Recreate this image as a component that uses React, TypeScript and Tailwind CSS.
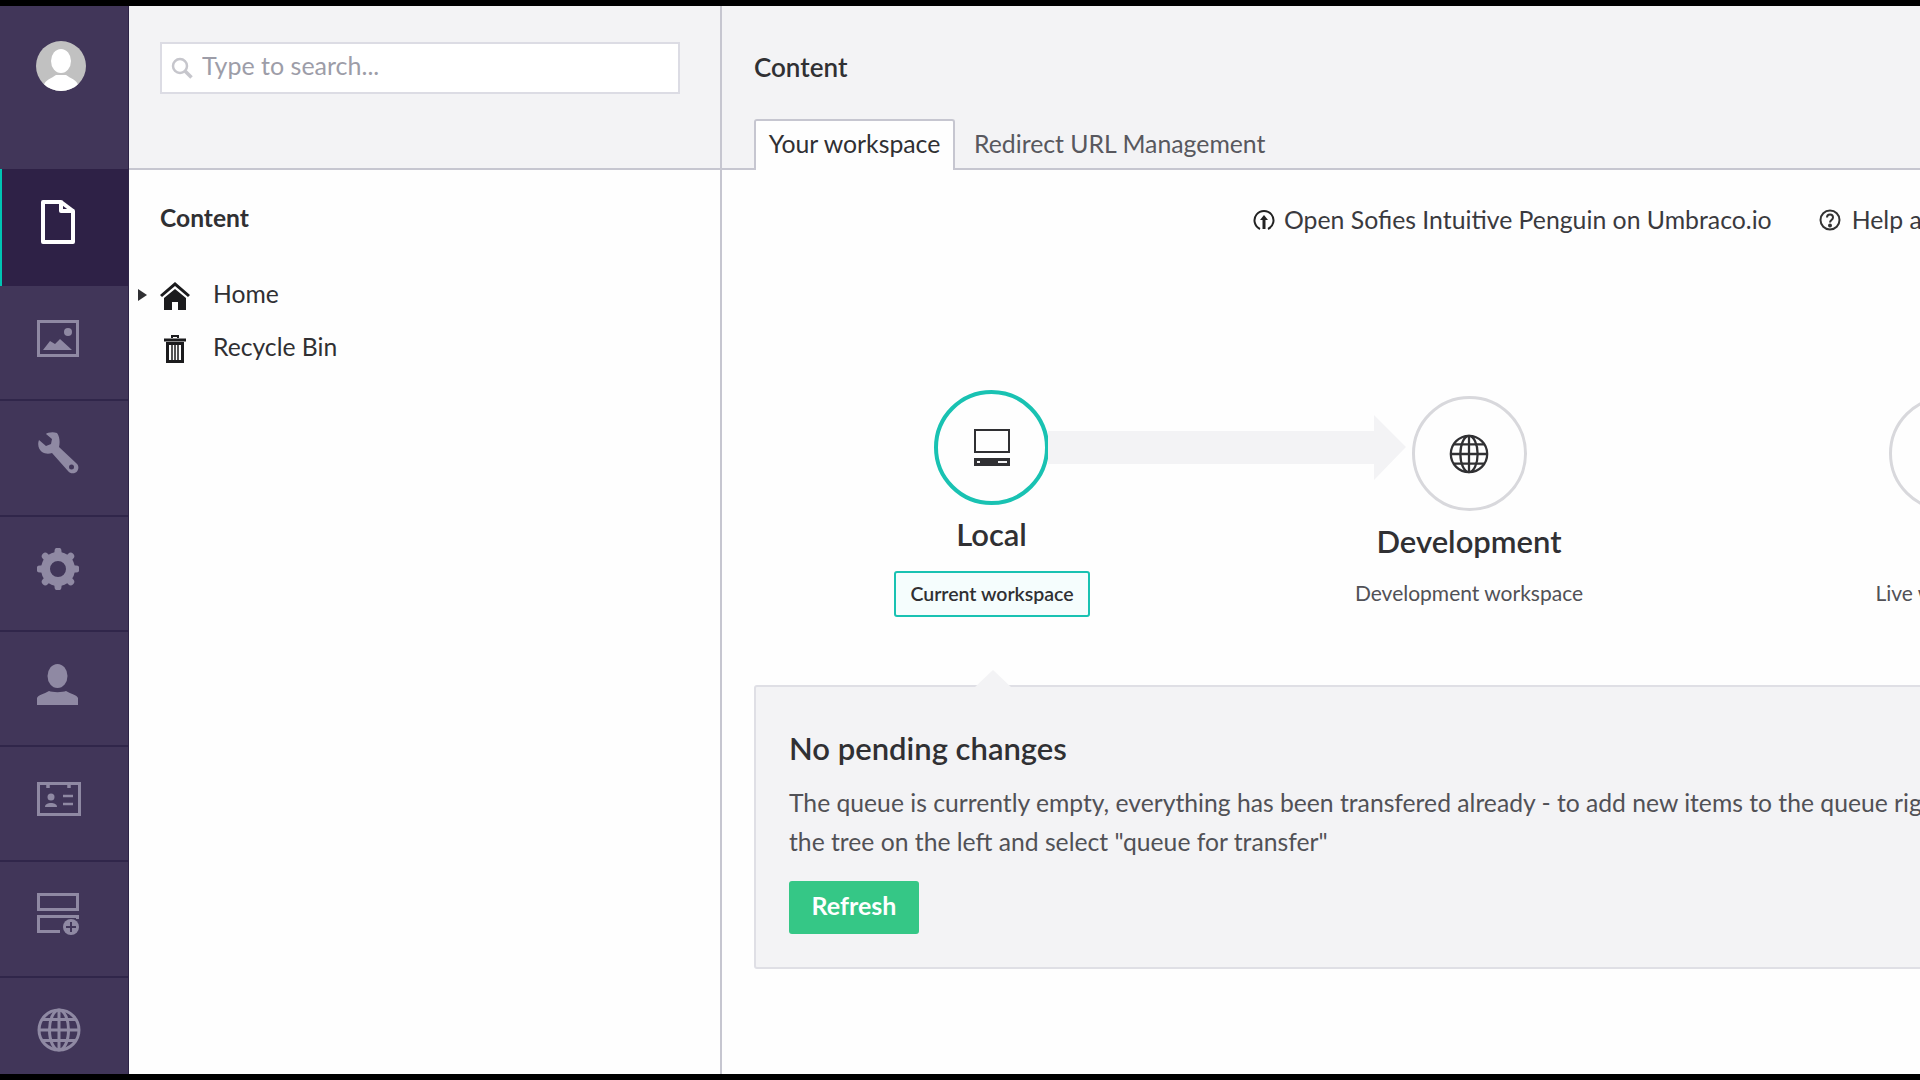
import React from "react";

const Doc = () => (
  <svg width="34" height="44" viewBox="0 0 34 44" fill="none" stroke="#fff" strokeWidth="4" strokeLinejoin="round"><path d="M2 2h18v9h12v31H2z" /><path d="M20 2l12 9" /></svg>
);
const Picture = () => (
  <svg width="42" height="37" viewBox="0 0 42 37" fill="none"><rect x="1.5" y="1.5" width="39" height="34" stroke="#8f89a3" strokeWidth="3" /><circle cx="31" cy="12" r="4" fill="#8f89a3" /><path d="M6 30l7-9 5 3 5-5 12 11z" fill="#8f89a3" /></svg>
);
const Wrench = () => (
  <svg width="42" height="42" viewBox="0 0 42 42" fill="none"><path d="M20 1C15-.500 10 1 9 2l6 5-1 5-5 2-7-6C0 13 2 18 5 20c3 2 7 2 10 1l16 18c2 3 7 3 9 .500s2-6.500-1-8.500L22 15c1-4 1-10-2-14z" fill="#8f89a3" /><circle cx="34.500" cy="35" r="2.500" fill="#413659" /></svg>
);
const Gear = () => (
  <svg width="42" height="42" viewBox="0 0 42 42" fill="none">
    <circle cx="21" cy="21" r="12.500" stroke="#8f89a3" strokeWidth="9" />
    <g stroke="#8f89a3" strokeWidth="7" strokeLinecap="round">
      <path d="M21 3v2M21 37v2M3 21h2M37 21h2M8.300 8.300l1.400 1.400M32.300 32.300l1.400 1.400M8.300 33.700l1.400-1.400M32.300 9.700l1.400-1.400" />
    </g>
  </svg>
);
const Person = () => (
  <svg width="41" height="41" viewBox="0 0 41 41" fill="#8f89a3"><ellipse cx="20.500" cy="12" rx="10" ry="12" /><path d="M0 41v-7c1-3 7-4 12-7 3 1.500 14 1.500 17 0 5 3 11 4 12 7v7z" /></svg>
);
const Card = () => (
  <svg width="44" height="34" viewBox="0 0 44 34" fill="none" stroke="#8f89a3"><path d="M1.500 1.500h41v31h-41z" strokeWidth="3" /><path d="M11 2v4M32 2v4" strokeWidth="3.500" /><circle cx="14" cy="15" r="3.500" fill="#8f89a3" strokeWidth="0" /><path d="M8 25c0-3 3-4 6-4s6 1 6 4z" fill="#8f89a3" strokeWidth="0" /><path d="M26 14h10M26 22h10" strokeWidth="2.500" /></svg>
);
const FormPlus = () => (
  <svg width="43" height="43" viewBox="0 0 43 43" fill="none" stroke="#8f89a3" strokeWidth="3"><rect x="1.500" y="1.500" width="39" height="15" /><path d="M40.500 26v-2.500h-39v15H23" /><circle cx="34" cy="34" r="8" fill="#8f89a3" stroke="none" /><path d="M34 29v10M29 34h10" stroke="#413659" strokeWidth="2" /></svg>
);
const Globe = ({ size, color, sw }: { size: number; color: string; sw: number }) => (
  <svg width={size} height={size} viewBox="0 0 44 44" fill="none" stroke={color} strokeWidth={sw}>
    <circle cx="22" cy="22" r="20" /><ellipse cx="22" cy="22" rx="9.500" ry="20" /><path d="M22 2v40M2 22h40M5 11.500h34M5 32.500h34" />
  </svg>
);

const navIcons = [<Picture />, <Wrench />, <Gear />, <Person />, <Card />, <FormPlus />, <Globe size={44} color="#8f89a3" sw={3} />];

function Nav() {
  return (
    <aside className="flex h-full w-[129px] shrink-0 flex-col overflow-hidden border-r border-[#2e2447] bg-[#413659]">
      <div className="h-[163px] shrink-0 pl-[36px] pt-[35px]">
        <div className="relative h-[50px] w-[50px] overflow-hidden rounded-full bg-[#c1c1c1]">
          <svg width="50" height="50" viewBox="0 0 50 50" fill="#fff"><ellipse cx="25" cy="20" rx="10" ry="12" /><path d="M8 50v-6c1-5 8-7 12-10h10c4 3 11 5 12 10v6z" /></svg>
        </div>
      </div>
      <div className="flex h-[117px] shrink-0 items-center border-l-2 border-[#00c4b3] bg-[#2e2146] pb-[11px] pl-[39px]"><Doc /></div>
      {navIcons.map((icon, i) => (
        <div key={i} className="flex h-[115.300px] shrink-0 items-center border-b-2 border-[#30264a] pb-[9px] pl-[37px]">{icon}</div>
      ))}
    </aside>
  );
}

function Tree() {
  return (
    <section className="flex h-full w-[593px] shrink-0 flex-col border-r-2 border-[#c6c6d0] bg-[#fefefe]">
      <div className="flex h-[164px] shrink-0 items-start border-b-2 border-[#c6c6d0] bg-[#f3f3f5] pl-[31px] pt-[36px]">
        <div className="flex h-[52px] w-[520px] items-center gap-[9px] border-2 border-[#dcdce4] bg-white pl-[9px]">
          <svg width="22" height="22" viewBox="0 0 22 22" fill="none" stroke="#c6c6cc" strokeWidth="2.500"><circle cx="9" cy="9" r="7" /><path d="M14 14l6.500 6.500" strokeWidth="3.500" /></svg>
          <input readOnly placeholder="Type to search..." className="w-[400px] -translate-y-[2px] bg-transparent text-[25px] outline-none placeholder:text-[#9d9da8]" />
        </div>
      </div>
      <div className="pl-[31px] pt-[30px]">
        <h2 className="text-[24.600px] leading-[36px] font-bold text-[#303033]">Content</h2>
      </div>
      <div className="relative pt-[31px] pl-[31px] text-[24.700px] text-[#303033]">
        <div className="flex h-[53px] items-center">
          <svg className="absolute left-[9px] mt-[2px]" width="9" height="12" viewBox="0 0 9 12" fill="#303033"><path d="M0 0l9 6-9 6z" /></svg>
          <svg className="mt-[4px]" width="30" height="28" viewBox="0 0 30 28" fill="#1b1b1d"><path d="M15 0L0 13l2 2L15 4l13 11 2-2z" /><path d="M15 7L4 16v12h8v-8h6v8h8V16z" /></svg>
          <span className="ml-[23px]">Home</span>
        </div>
        <div className="flex h-[53px] items-center">
          <span className="mt-[4px] flex w-[30px] justify-center">
            <svg width="22" height="29" viewBox="0 0 22 29" fill="none" stroke="#1b1b1d"><path d="M0 6h22" strokeWidth="3" /><path d="M8 4V2h6v2" strokeWidth="2" /><path d="M3.500 9.500h15V27.500h-15z" strokeWidth="3" /><path d="M8 11v15M11 11v15M14 11v15" strokeWidth="1.500" /></svg>
          </span>
          <span className="ml-[23px]">Recycle Bin</span>
        </div>
      </div>
    </section>
  );
}

function Main() {
  return (
    <main className="flex h-full min-w-0 flex-1 flex-col overflow-hidden bg-[#fefefe]">
      <header className="flex h-[164px] shrink-0 flex-col border-b-2 border-[#c6c6d0] bg-[#f3f3f5] pl-[32px]">
        <h1 className="pt-[43px] text-[26px] leading-[36px] font-semibold text-[#303033]">Content</h1>
        <nav className="mt-auto -mb-[2px] flex text-[24.800px]">
          <div className="flex h-[51px] w-[201px] items-center justify-center rounded-t-[3px] border-2 border-b-0 border-[#c6c6d0] bg-[#fefefe] pb-[4px] text-[#303033]">Your workspace</div>
          <div className="flex h-[51px] items-center pb-[2px] pl-[19px] text-[#58585e]">Redirect URL Management</div>
        </nav>
      </header>

      <div className="flex h-[64px] w-[1400px] shrink-0 items-center pl-[531px] pt-[35px] text-[24.800px] whitespace-nowrap text-[#3a3a3e]">
        <svg width="22" height="22" viewBox="0 0 22 22" fill="none" stroke="#222" strokeWidth="2"><path d="M7 20a9.500 9.500 0 1 1 8 0" /><path d="M11 6l-4 5h2.500v9h3v-9H15z" fill="#222" stroke="none" /></svg>
        <span className="ml-[9px]">Open Sofies Intuitive Penguin on Umbraco.io</span>
        <svg className="ml-[47px]" width="22" height="22" viewBox="0 0 22 22" fill="none" stroke="#333" strokeWidth="2"><circle cx="11" cy="11" r="9.500" /><path d="M8 8.500c0-4 6-4 6 0 0 2.500-3 2.500-3 5" /><circle cx="11" cy="16.500" r="1" fill="#333" /></svg>
        <span className="ml-[11px]">Help and documentation</span>
      </div>

      <div className="flex w-[1500px] shrink-0 items-start pt-[156px] pl-[30px]">
        <div className="relative flex w-[478px] shrink-0 flex-col items-center">
          <svg className="absolute top-[25px] left-[296px]" width="358" height="65" viewBox="0 0 358 65" fill="#f3f3f5"><path d="M0 16h326V0l32 32-32 33V49H0z" /></svg>
          <div className="flex h-[115px] w-[115px] items-center justify-center rounded-full border-[4px] border-[#19c2b2] bg-[#fefefe]">
            <svg className="ml-[1px]" width="36" height="37" viewBox="0 0 36 37" fill="none"><rect x="1" y="1" width="34" height="22" stroke="#303033" strokeWidth="2" /><path d="M0 29h36v8H0z" fill="#303033" /><path d="M3 32h3v2H3zM24 32h9v2h-9z" fill="#f3f3f5" /></svg>
          </div>
          <div className="mt-[8px] ml-[1px] text-[31px] leading-[42px] font-semibold text-[#303033]">Local</div>
          <div className="mt-[16px] ml-[2px] flex h-[46px] w-[196px] items-center justify-center rounded-[3px] border-2 border-[#19c2b2] bg-[#f5fdfd] text-[19.500px] font-semibold text-[#303033]">Current workspace</div>
        </div>
        <div className="mt-[6px] flex w-[478px] shrink-0 flex-col items-center">
          <div className="flex h-[115px] w-[115px] items-center justify-center rounded-full border-[3px] border-[#d8d8dc] bg-[#fefefe]">
            <Globe size={40} color="#303033" sw={2.500} />
          </div>
          <div className="mt-[9px] text-[31px] leading-[42px] font-semibold text-[#303033]">Development</div>
          <div className="mt-[11px] flex h-[40px] items-center text-[21px] text-[#515156]">Development workspace</div>
        </div>
        <div className="mt-[6px] -ml-[1px] flex w-[478px] shrink-0 flex-col items-center">
          <div className="h-[115px] w-[115px] rounded-full border-[3px] border-[#d8d8dc] bg-[#fefefe]" />
          <div className="mt-[9px] text-[31px] leading-[42px] font-semibold text-[#303033]">Live</div>
          <div className="mt-[11px] flex h-[40px] items-center text-[21px] text-[#515156]">Live workspace</div>
        </div>
      </div>

      <div className="relative mt-[68px] ml-[32px] h-[284px] w-[1400px] shrink-0 rounded-[3px] border-2 border-[#dfdfe5] bg-[#f3f3f5] pt-[40px] pl-[33px]">
        <svg className="absolute -top-[17px] left-[218px]" width="38" height="18" viewBox="0 0 38 18" fill="#f3f3f5"><path d="M0 18L19 0l19 18z" /></svg>
        <h3 className="text-[31px] leading-[42px] font-semibold text-[#303033]">No pending changes</h3>
        <p className="mt-[14px] text-[24.700px] leading-[39px] whitespace-nowrap text-[#515156]">The queue is currently empty, everything has been transfered already - to add new items to the queue right-click on<br />the tree on the left and select "queue for transfer"</p>
        <button className="mt-[20px] h-[53px] w-[130px] rounded-[3px] bg-[#35c786] pb-[4px] text-[25px] font-bold text-white">Refresh</button>
      </div>
    </main>
  );
}

export default function App() {
  return (
    <div className="h-[1080px] w-[1920px] overflow-hidden bg-black py-[6px] font-['Lato',sans-serif]">
      <div className="flex h-[1068px] overflow-hidden">
        <Nav />
        <Tree />
        <Main />
      </div>
    </div>
  );
}
